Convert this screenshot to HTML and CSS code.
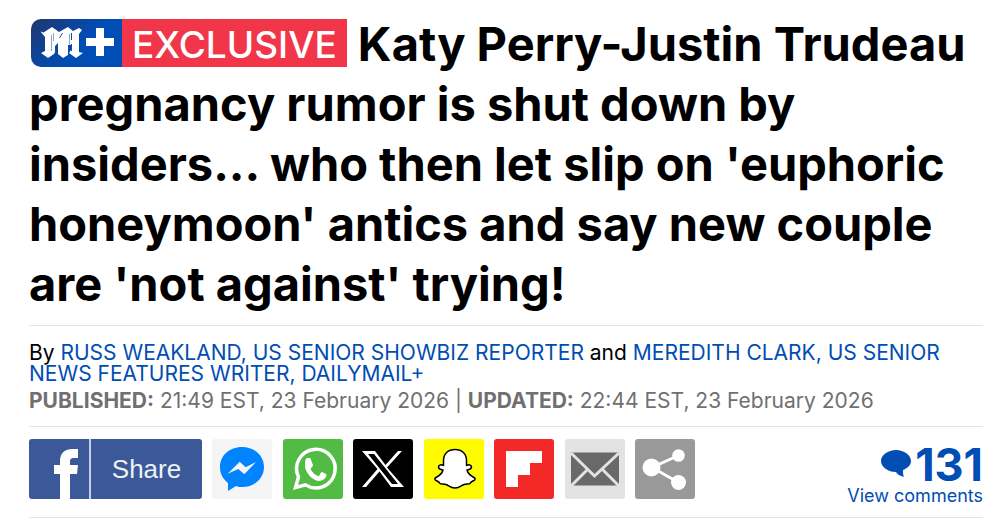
FILE: index.html
```html
<!DOCTYPE html>
<html lang="en">
<head>
<meta charset="utf-8">
<meta name="viewport" content="width=device-width, initial-scale=1">
<title>Katy Perry-Justin Trudeau pregnancy rumor is shut down by insiders</title>
<link rel="stylesheet" href="styles.css">
</head>
<body>
<article class="article">
  <h1 class="headline"><span class="badge"><span class="badge-logo"><svg class="badge-mark" viewBox="0 0 91 48" role="img" aria-label="Mail plus">
    <path fill="#fff" d="M9.500 12.500l3 1L21 8l7 5 9-5 5 4 6-3 3 2-3 4v18l4 1-7 5-7-5 2-3V26h-3v10l-5 3-5-4V24l-3 3v6l-1 2-6 4-7-5 4-2V18z"/>
    <path fill="none" stroke="#8fa6d2" stroke-width="1" d="M20.500 16v16M38.500 15v11M22.500 14v8"/>
    <path fill="none" stroke="#164ba5" stroke-width="1" d="M24.500 29v6M31.500 14l-3 5M40.500 14v7M40.500 25v7"/>
    <path fill="#fff" d="M65 9h8v10h10v8H73v10h-8V27H55v-8h10z"/>
  </svg></span><span class="badge-text">EXCLUSIVE</span></span> Katy Perry-Justin Trudeau pregnancy rumor is shut down by insiders... who then let slip on 'euphoric honeymoon' antics and say new couple are 'not against' trying!</h1>
  <div class="meta">
    <p class="byline">By <a href="#">RUSS WEAKLAND, US SENIOR SHOWBIZ REPORTER</a> and <a href="#">MEREDITH CLARK, US SENIOR NEWS FEATURES WRITER, DAILYMAIL+</a></p>
    <p class="dates"><strong>PUBLISHED:</strong> <time>21:49 EST, 23 February 2026</time> | <strong>UPDATED:</strong> <time>22:44 EST, 23 February 2026</time></p>
  </div>
  <div class="toolbar">
    <div class="shares">
      <button class="share facebook" type="button">
        <svg class="facebook-icon" viewBox="0 0 62 60" aria-hidden="true"><path fill="#fff" d="M31 60V35h-6v-9h6v-4c0-8 5-12 12-12h6v9h-4c-3 0-4 1-4 4v3h8l-1 9h-7v25z"/><path fill="#c5d0e5" d="M60 0h2v60h-2z"/></svg>
        <span class="facebook-label">Share</span>
      </button>
      <button class="share messenger" type="button" aria-label="Share on Messenger"><svg viewBox="0 0 60 60"><path fill="#0084ff" d="M30 8C17 8 8 17 8 28c0 7 3 12 8 16v8l8-5c2 1 4 1 6 1 13 0 22-9 22-20S43 8 30 8z"/><path fill="#f5f5f5" d="M27.700 22.700l6 5.600L44 23 32.300 35.300l-6-5.300-10.600 4.700z"/></svg></button>
      <button class="share whatsapp" type="button" aria-label="Share on WhatsApp"><svg viewBox="0 0 60 60"><path fill="none" stroke="#fff" stroke-width="3.500" d="M12.500 48.500l3-10.500A19.300 19.300 0 1 1 22.500 45.900z"/><path fill="#fff" d="M24 19h2c1 0 2 0 2 2l2 5c0 2-3 3-2 5 2 3 4 5 7 6 2 1 2-4 4-4l4 2c1 1 0 2 0 3-2 3-5 4-8 4-6-1-13-9-13-15 0-4 0-7 2-8z"/></svg></button>
      <button class="share x" type="button" aria-label="Share on X"><svg viewBox="0 0 60 60"><path fill="#fff" fill-rule="evenodd" d="M9 12h13l10.500 14L45 12h4L34 28.500 51 48H38L26.500 32.500 13 48H9l15.500-18zM15 15l24 30h6L21 15z"/></svg></button>
      <button class="share snapchat" type="button" aria-label="Share on Snapchat"><svg viewBox="0 0 60 60"><path fill="#fff" stroke="#000" stroke-width="1.500" stroke-linejoin="round" d="M31 10.500c-7 0-11.500 4.500-11.500 11v5c-2-1-5-1-5 1.500s3 2.500 4.500 3c-1 4-4 6-7 7.500-2 1-1 2.500 0 3 2 1 3 1 4 3 1 1 4 0 6 1 3 1 4 3.500 9 3.500s6-2.500 9-3.500c2-1 5 0 6-1 1-2 2-2 4-3 1-.5 2-2 0-3-3-1.500-6-3.500-7-7.500 1.500-.5 4.500-.5 4.500-3s-3-2.500-5-1.500v-5c0-6.500-4.500-11-11.500-11z"/></svg></button>
      <button class="share flipboard" type="button" aria-label="Share on Flipboard"><svg viewBox="0 0 60 60"><path fill="#fff" d="M12 12h36v12H36v12H24v12H12z"/></svg></button>
      <button class="share email" type="button" aria-label="Share by email"><svg viewBox="0 0 60 60"><path fill="#696969" d="M6 13.500h48v33H6z"/><path fill="none" stroke="#e3e3e3" stroke-width="3" d="M6 14l23.500 23L54 14M6 47l16-16M54 47L38 31"/></svg></button>
      <button class="share more" type="button" aria-label="More sharing options"><svg viewBox="0 0 60 60"><path fill="none" stroke="#fff" stroke-width="3" d="M43.500 16.500L17 28.500l26.500 15"/><circle cx="16.500" cy="28.500" r="9" fill="#fff"/><circle cx="43.500" cy="16.500" r="6.300" fill="#fff"/><circle cx="43.500" cy="43.500" r="7.500" fill="#fff"/></svg></button>
    </div>
    <a class="comments" href="#">
      <span class="comments-count"><svg class="bubble" viewBox="0 0 30 27" aria-hidden="true"><path fill="#004db3" d="M15 0c8 0 15 5 15 11 0 4-3 7-8 9 0 3 0 5 1 7-4-1-7-3-8-5C7 22 0 17 0 11S7 0 15 0z"/></svg>131</span>
      <span class="comments-label">View comments</span>
    </a>
  </div>
</article>
</body>
</html>
```
FILE: styles.css
```css
* {
  box-sizing: border-box;
}

body {
  margin: 0;
  background: #fff;
  color: #000;
  font-family: Inter, "Liberation Sans", sans-serif;
}

a {
  color: #004db3;
  text-decoration: none;
}

.article {
  padding: 14px 25px 0 29px;
}

.headline {
  margin: 0;
  padding-bottom: 11px;
  font-size: 47px;
  font-weight: 700;
  line-height: 60px;
}

.badge {
  display: inline-flex;
  height: 48px;
  margin: 5px 0 0 2px;
  overflow: hidden;
  vertical-align: top;
  border-radius: 10px 0 0 10px;
  color: #fff;
  font-size: 37px;
  font-weight: 500;
  line-height: 52px;
}

.badge-logo {
  width: 91px;
  background: linear-gradient(135deg, #22366f, #004db3 55%);
}

.badge-mark {
  display: block;
  height: 48px;
}

.badge-text {
  padding: 0 10px;
  background: #f1364a;
}

.meta {
  padding: 16px 0 12px;
  border-top: 1px solid #e3e3e3;
  border-bottom: 1px solid #e3e3e3;
  font-size: 21px;
}

.byline {
  margin: 0;
  line-height: 21px;
}

.dates {
  margin: 4px 0 0;
  color: #707070;
  line-height: 26px;
}

.toolbar {
  display: flex;
  align-items: flex-start;
  justify-content: space-between;
  padding: 12px 0;
  border-bottom: 1px solid #e3e3e3;
}

.shares {
  display: flex;
  flex-basis: 666px;
  justify-content: space-between;
}

.share {
  width: 60px;
  height: 60px;
  padding: 0;
  overflow: hidden;
  border: 0;
  border-radius: 3px;
  cursor: pointer;
}

.share svg {
  display: block;
  height: 60px;
}

.facebook {
  display: flex;
  align-items: center;
  width: 173px;
  background: #3b5998;
  color: #eef1f7;
}

.facebook-icon {
  width: 62px;
}

.facebook-label {
  flex: 1;
  font: 26px/60px "Liberation Sans", Arial, sans-serif;
}

.messenger { background: #f5f5f5; }
.whatsapp { background: #52bb44; }
.x { background: #000; }
.snapchat { background: #fffc00; }
.flipboard { background: #f52828; }
.email { background: #e3e3e3; }
.more { background: #999; }

.comments {
  display: flex;
  flex-direction: column;
  align-items: flex-end;
}

.comments-count {
  display: flex;
  align-items: center;
  gap: 4px;
  padding-top: 4px;
  font-size: 45px;
  font-weight: 700;
  line-height: 44px;
}

.bubble {
  width: 30px;
  height: 27px;
  margin-bottom: 4px;
}

.comments-label {
  font-size: 18px;
  line-height: 18px;
}
```
